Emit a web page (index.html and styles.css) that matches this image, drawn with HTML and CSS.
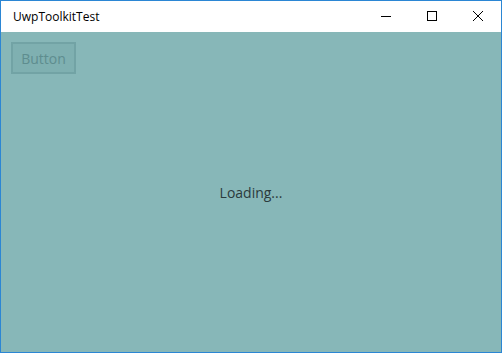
FILE: index.html
```html
<!DOCTYPE html>
<html lang="en">
<head>
  <meta charset="UTF-8">
  <title>UwpToolkitTest</title>
  <link rel="stylesheet" href="styles.css">
</head>
<body>
  <div class="window">
    <div class="titlebar">
      <span class="title">UwpToolkitTest</span>
      <div class="caption-buttons">
        <span class="caption-btn">
          <svg width="10" height="10" viewBox="0 0 10 10"><path d="M0 5.5h10" stroke="#000" stroke-width="1"/></svg>
        </span>
        <span class="caption-btn">
          <svg width="10" height="10" viewBox="0 0 10 10"><rect x="0.5" y="0.5" width="9" height="9" fill="none" stroke="#000" stroke-width="1"/></svg>
        </span>
        <span class="caption-btn">
          <svg width="10" height="10" viewBox="0 0 10 10"><path d="M0 0L10 10M10 0L0 10" stroke="#000" stroke-width="1"/></svg>
        </span>
      </div>
    </div>
    <div class="content">
      <div class="toolbar">
        <span class="btn">Button</span>
      </div>
      <div class="loading">Loading...</div>
    </div>
  </div>
</body>
</html>
```

FILE: styles.css
```css
html, body {
  margin: 0;
  padding: 0;
}

body {
  width: 502px;
  height: 353px;
  font-family: "Segoe UI", "Open Sans", "Noto Sans", sans-serif;
}

.window {
  box-sizing: border-box;
  width: 502px;
  height: 353px;
  border: 1px solid #2b86d4;
  display: flex;
  flex-direction: column;
}

.titlebar {
  height: 31px;
  background: #fff;
  display: flex;
  align-items: center;
  justify-content: space-between;
}

.title {
  font-size: 12px;
  color: #000;
  padding-left: 12px;
  padding-bottom: 1px;
}

.caption-buttons {
  display: flex;
  height: 100%;
}

.caption-btn {
  width: 46px;
  display: flex;
  align-items: center;
  justify-content: center;
  padding-bottom: 1px;
}

.content {
  flex: 1;
  background: #87b7b8;
  display: flex;
  flex-direction: column;
}

.toolbar {
  padding: 10px 0 0 10px;
}

.btn {
  display: inline-block;
  box-sizing: border-box;
  width: 65px;
  height: 32px;
  line-height: 28px;
  padding-top: 1px;
  text-align: center;
  border: 2px solid #72a3a5;
  background: #7fb0b1;
  color: #5e8d8f;
  font-size: 14px;
}

.loading {
  flex: 1;
  display: flex;
  align-items: center;
  justify-content: center;
  padding-bottom: 42px;
  color: #2b3b3c;
  font-size: 14px;
}
```
